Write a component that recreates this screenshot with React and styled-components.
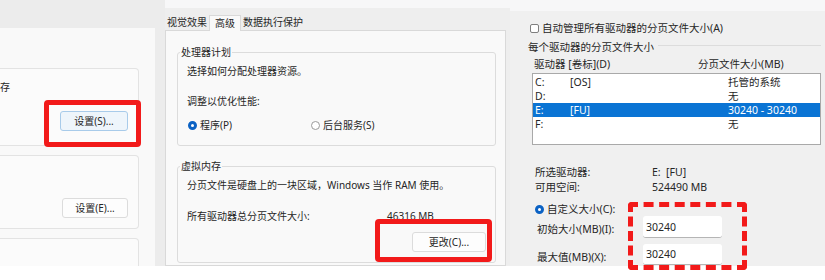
import React from "react";
import styled, { createGlobalStyle, css } from "styled-components";

const Global = createGlobalStyle`
  html, body { margin: 0; padding: 0; background: #ffffff; }
  * { box-sizing: border-box; }
`;

const Root = styled.div`
  position: relative;
  width: 825px;
  height: 280px;
  overflow: hidden;
  background: #ffffff;
  font-family: "Noto Sans", "Noto Sans CJK SC", sans-serif;
  color: #262626;
  font-size: 10px;
`;

const Panels = styled.div`
  display: flex;
  height: 266px;
`;

/* ---------- panel 1: settings cards ---------- */
const SettingsPanel = styled.section`
  width: 165px;
  flex: none;
  background: #ececec;
  padding: 28px 10px 0 0;
  display: flex;
`;

const SettingsPane = styled.div`
  flex: 1;
  background: #f9f9f9;
  padding: 40px 16px 0 0;
  display: flex;
  flex-direction: column;
  gap: 9px;
  overflow: hidden;
`;

const Card = styled.div`
  flex: none;
  height: ${(p) => p.$h}px;
  background: #fbfbfb;
  border: 1px solid #e3e3e3;
  border-left: none;
  border-radius: 0 4px 4px 0;
  display: flex;
  flex-direction: column;
  align-items: flex-end;
  padding: 11px 10px ${(p) => p.$pb}px 0;
`;

const CardTitle = styled.div`
  align-self: flex-start;
  line-height: 14px;
  font-size: 10px;
`;

const WinButton = styled.button`
  margin-top: auto;
  font: inherit;
  font-size: 10px;
  color: #262626;
  width: ${(p) => p.$w}px;
  height: 20px;
  padding: 0;
  line-height: 18px;
  border-radius: 3px;
  border: 1px solid ${(p) => (p.$focus ? "#a8cbea" : "#dcdcdc")};
  background: ${(p) => (p.$focus ? "#eef5fb" : "#fdfdfd")};
`;

/* ---------- panel 2: system properties ---------- */
const PropsPanel = styled.section`
  width: 345px;
  flex: none;
  background: #eeeeee;
  display: flex;
  flex-direction: column;
`;

const TitleStrip = styled.div`
  flex: none;
  height: ${(p) => p.$h}px;
  background: #f7f7f8;
`;

const TabBar = styled.div`
  flex: none;
  height: 22px;
  display: flex;
  align-items: flex-end;
  position: relative;
  z-index: 1;
`;

const Tab = styled.div`
  height: 15px;
  line-height: 14px;
  padding: 0 2px;
  ${(p) =>
    p.$active &&
    css`
      height: 16px;
      padding: 0 5px;
      background: #f9f9f9;
      border: 1px solid #d9d9d9;
      border-bottom: none;
      margin-bottom: -1px;
    `}
`;

const TabContent = styled.div`
  flex: 1;
  margin-right: 4px;
  background: #f9f9f9;
  border: 1px solid #d9d9d9;
  padding: 14px 9px 0 11px;
  display: flex;
  flex-direction: column;
`;

const Group = styled.fieldset`
  margin: ${(p) => p.$mt || 0}px 0 0 0;
  min-width: 0;
  border: 1px solid #dcdcdc;
  border-radius: 3px;
  padding: 0 9px ${(p) => p.$pb}px 9px;
`;

const Legend = styled.legend`
  padding: 0 1px;
  margin-left: -7px;
  font-size: 10px;
  line-height: 14px;
`;

const GroupBody = styled.div`
  display: flex;
  flex-direction: column;
`;

const TextLine = styled.div`
  line-height: 14px;
  margin-top: ${(p) => p.$mt || 0}px;
  white-space: nowrap;
`;

const RadioRow = styled.div`
  display: grid;
  grid-template-columns: 123px auto;
  margin: ${(p) => p.$mt || 0}px 0 0 1px;
  line-height: 14px;
`;

const RadioLabel = styled.label`
  display: inline-flex;
  align-items: center;
  gap: 3px;
  white-space: nowrap;
`;

const Radio = styled.span`
  flex: none;
  width: 9px;
  height: 9px;
  border-radius: 50%;
  background: #ffffff;
  ${(p) =>
    p.$checked
      ? css`
          border: 3px solid #0b62c4;
        `
      : css`
          border: 1px solid #9a9a9a;
        `}
`;

const ValueRow = styled.div`
  display: grid;
  grid-template-columns: 200px auto;
  line-height: 14px;
  margin-top: ${(p) => p.$mt || 0}px;
  white-space: nowrap;
`;

const ButtonRow = styled.div`
  display: flex;
  justify-content: flex-end;
  margin-top: ${(p) => p.$mt || 0}px;
`;

/* ---------- panel 3: virtual memory ---------- */
const PagingPanel = styled.section`
  flex: 1;
  background: #f0f0f0;
  display: flex;
  flex-direction: column;
  font-size: 10.5px;
`;

const PagingBody = styled.div`
  padding: 0 4px 0 18px;
  display: flex;
  flex-direction: column;
`;

const CheckRow = styled.label`
  margin: 10px 0 0 2px;
  display: flex;
  align-items: center;
  gap: 3px;
  line-height: 14px;
  white-space: nowrap;
`;

const CheckBox = styled.span`
  width: 9px;
  height: 9px;
  border: 1px solid #7f7f7f;
  border-radius: 2px;
  background: #ffffff;
  flex: none;
`;

const SectionTitle = styled.div`
  margin-top: 5px;
  display: flex;
  align-items: center;
  gap: 4px;
  line-height: 14px;
  white-space: nowrap;
  &::after {
    content: "";
    flex: 1;
    height: 1px;
    margin-top: -4px;
    background: #dcdcdc;
  }
`;

const ListHeader = styled.div`
  margin: 3px 0 0 6px;
  display: grid;
  grid-template-columns: 164px auto;
  line-height: 14px;
  white-space: nowrap;
`;

const DriveList = styled.div`
  margin: 2px 0 0 4px;
  height: 72px;
  background: #ffffff;
  border: 1px solid #a9a9a9;
  padding-top: 1px;
`;

const DriveRow = styled.div`
  display: grid;
  grid-template-columns: 35px 158px auto;
  height: 14px;
  line-height: 14px;
  padding-left: 2px;
  white-space: nowrap;
  ${(p) =>
    p.$selected &&
    css`
      background: #0a74d4;
      color: #ffffff;
    `}
`;

const InfoGrid = styled.div`
  margin: ${(p) => p.$mt || 0}px 0 0 7px;
  display: grid;
  grid-template-columns: 117px auto;
  line-height: 15px;
  white-space: nowrap;
`;

const CustomRadio = styled(RadioLabel)`
  margin: 7px 0 0 7px;
  line-height: 14px;
  gap: 3px;
`;

const SizeRow = styled.div`
  margin: ${(p) => p.$mt || 0}px 0 0 9px;
  display: grid;
  grid-template-columns: 106px 79px;
  align-items: center;
  white-space: nowrap;
`;

const SizeLabel = styled.span`
  padding-top: 4px;
  line-height: 14px;
`;

const SizeInput = styled.input`
  width: 79px;
  height: ${(p) => p.$h}px;
  font: inherit;
  font-size: 10.5px;
  color: #262626;
  background: #ffffff;
  border: none;
  border-bottom: 1px solid #b5b5b5;
  border-radius: 3px;
  padding: 0 3px;
  outline: none;
`;

/* ---------- red annotations ---------- */
const Mark = styled.div`
  position: absolute;
  left: ${(p) => p.$x}px;
  top: ${(p) => p.$y}px;
  width: ${(p) => p.$w}px;
  height: ${(p) => p.$h}px;
  border: 5px ${(p) => (p.$dashed ? "dashed" : "solid")} #f21a1a;
  border-radius: 4px;
  pointer-events: none;
`;

export default function App() {
  return (
    <Root>
      <Global />
      <Panels>
        <SettingsPanel>
          <SettingsPane>
            <Card $h={78} $pb={14}>
              <CardTitle>存</CardTitle>
              <WinButton $w={68} $focus>
                设置(S)...
              </WinButton>
            </Card>
            <Card $h={74} $pb={10}>
              <WinButton $w={66}>设置(E)...</WinButton>
            </Card>
            <Card $h={40} $pb={0} />
          </SettingsPane>
        </SettingsPanel>

        <PropsPanel>
          <TitleStrip $h={8} />
          <TabBar>
            <Tab>视觉效果</Tab>
            <Tab $active>高级</Tab>
            <Tab>数据执行保护</Tab>
          </TabBar>
          <TabContent>
            <Group $pb={13}>
              <Legend>处理器计划</Legend>
              <GroupBody>
                <TextLine $mt={5}>选择如何分配处理器资源。</TextLine>
                <TextLine $mt={16}>调整以优化性能:</TextLine>
                <RadioRow $mt={10}>
                  <RadioLabel>
                    <Radio $checked />
                    程序(P)
                  </RadioLabel>
                  <RadioLabel>
                    <Radio />
                    后台服务(S)
                  </RadioLabel>
                </RadioRow>
              </GroupBody>
            </Group>
            <Group $mt={13} $pb={10}>
              <Legend>虚拟内存</Legend>
              <GroupBody>
                <TextLine $mt={5}>
                  分页文件是硬盘上的一块区域，Windows 当作 RAM 使用。
                </TextLine>
                <ValueRow $mt={17}>
                  <span>所有驱动器总分页文件大小:</span>
                  <span>46316 MB</span>
                </ValueRow>
                <ButtonRow $mt={9}>
                  <WinButton $w={74}>更改(C)...</WinButton>
                </ButtonRow>
              </GroupBody>
            </Group>
          </TabContent>
        </PropsPanel>

        <PagingPanel>
          <TitleStrip $h={11} />
          <PagingBody>
            <CheckRow>
              <CheckBox />
              自动管理所有驱动器的分页文件大小(A)
            </CheckRow>
            <SectionTitle>每个驱动器的分页文件大小</SectionTitle>
            <ListHeader>
              <span>驱动器 [卷标](D)</span>
              <span>分页文件大小(MB)</span>
            </ListHeader>
            <DriveList>
              <DriveRow>
                <span>C:</span>
                <span>[OS]</span>
                <span>托管的系统</span>
              </DriveRow>
              <DriveRow>
                <span>D:</span>
                <span></span>
                <span>无</span>
              </DriveRow>
              <DriveRow $selected>
                <span>E:</span>
                <span>[FU]</span>
                <span>30240 - 30240</span>
              </DriveRow>
              <DriveRow>
                <span>F:</span>
                <span></span>
                <span>无</span>
              </DriveRow>
            </DriveList>
            <InfoGrid $mt={20}>
              <span>所选驱动器:</span>
              <span>E:&nbsp;&nbsp;[FU]</span>
              <span>可用空间:</span>
              <span>524490 MB</span>
            </InfoGrid>
            <CustomRadio>
              <Radio $checked />
              自定义大小(C):
            </CustomRadio>
            <SizeRow>
              <SizeLabel>初始大小(MB)(I):</SizeLabel>
              <SizeInput $h={22} readOnly value="30240" />
            </SizeRow>
            <SizeRow $mt={6}>
              <SizeLabel>最大值(MB)(X):</SizeLabel>
              <SizeInput $h={21} readOnly value="30240" />
            </SizeRow>
          </PagingBody>
        </PagingPanel>
      </Panels>

      <Mark $x={44} $y={100} $w={97} $h={47} />
      <Mark $x={375} $y={219} $w={117} $h={43} />
      <Mark $x={628} $y={202} $w={119} $h={68} $dashed />
    </Root>
  );
}
